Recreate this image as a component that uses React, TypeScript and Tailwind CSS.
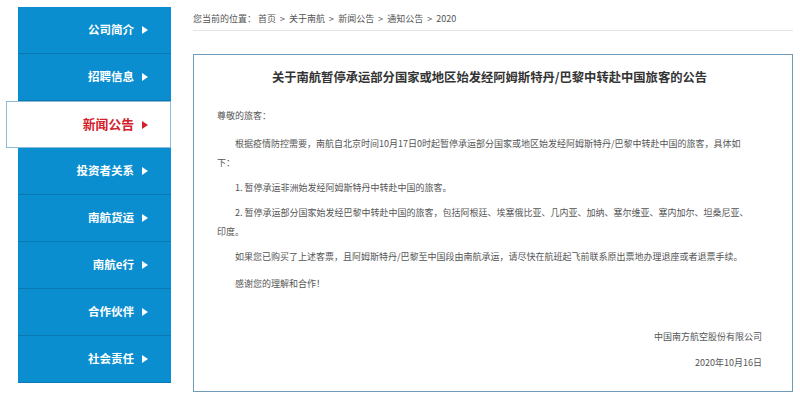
import React from "react";

const FONT = { fontFamily: '"Noto Sans CJK SC", "Noto Sans", sans-serif' };

function Arrow({ color }: { color: string }) {
  return (
    <svg width="6" height="8" viewBox="0 0 6 8" className="ml-[8px] shrink-0">
      <polygon points="0,0 6,4 0,8" fill={color} />
    </svg>
  );
}

const items = [
  "公司简介",
  "招聘信息",
  "新闻公告",
  "投资者关系",
  "南航货运",
  "南航e行",
  "合作伙伴",
  "社会责任",
];

export default function App() {
  return (
    <div className="w-[800px] h-[400px] bg-white flex items-start overflow-hidden" style={FONT}>
      <div className="ml-[18px] mt-[7px] w-[153px] bg-[#0a8ecf] flex flex-col">
        {items.map((t) =>
          t === "新闻公告" ? (
            <div
              key={t}
              className="-ml-[12px] w-[165px] h-[47px] bg-white border border-[#8dbad6] flex items-center justify-end pr-[22px]"
            >
              <span className="text-[12.8px] font-bold text-[#d3202b] leading-none">{t}</span>
              <Arrow color="#d3202b" />
            </div>
          ) : (
            <div
              key={t}
              className="h-[47px] border-b border-[#0879b4] flex items-center justify-end pr-[23px] text-white"
            >
              <span className="text-[11.5px] font-bold leading-none">{t}</span>
              <Arrow color="#ffffff" />
            </div>
          )
        )}
      </div>

      <div className="ml-[22px] w-[600px] flex flex-col">
        <div className="pt-[12px] pb-[5px] border-b border-[#e4e4e4] text-[9px] leading-[13px] text-[#555] whitespace-nowrap">
          您当前的位置：&nbsp;首页&nbsp;&nbsp;&gt;&nbsp;&nbsp;关于南航&nbsp;&nbsp;&gt;&nbsp;&nbsp;新闻公告&nbsp;&nbsp;&gt;&nbsp;&nbsp;通知公告&nbsp;&nbsp;&gt;&nbsp;&nbsp;2020
        </div>

        <div className="mt-[23px] h-[338px] border border-[#6f9cba] pl-[23px] pr-[30px] flex flex-col">
          <div className="pt-[14px] text-center text-[12.3px] leading-[16px] font-bold text-[#333] whitespace-nowrap">
            关于南航暂停承运部分国家或地区始发经阿姆斯特丹/巴黎中转赴中国旅客的公告
          </div>

          <div className="mt-[21px] text-[9px] leading-[19px] text-[#555] whitespace-nowrap">
            <p>尊敬的旅客：</p>
            <p className="mt-[9px] indent-[2em]">
              根据疫情防控需要，南航自北京时间10月17日0时起暂停承运部分国家或地区始发经阿姆斯特丹/巴黎中转赴中国的旅客，具体如
              <br />
              下：
            </p>
            <p className="mt-[6px] indent-[2em]">1. 暂停承运非洲始发经阿姆斯特丹中转赴中国的旅客。</p>
            <p className="mt-[6px] indent-[2em]">
              2. 暂停承运部分国家始发经巴黎中转赴中国的旅客，包括阿根廷、埃塞俄比亚、几内亚、加纳、塞尔维亚、塞内加尔、坦桑尼亚、
              <br />
              印度。
            </p>
            <p className="mt-[6px] indent-[2em]">
              如果您已购买了上述客票，且阿姆斯特丹/巴黎至中国段由南航承运，请尽快在航班起飞前联系原出票地办理退座或者退票手续。
            </p>
            <p className="mt-[8px] indent-[2em]">感谢您的理解和合作！</p>
            <p className="mt-[34px] text-right">中国南方航空股份有限公司</p>
            <p className="mt-[7px] text-right">2020年10月16日</p>
          </div>
        </div>
      </div>
    </div>
  );
}
